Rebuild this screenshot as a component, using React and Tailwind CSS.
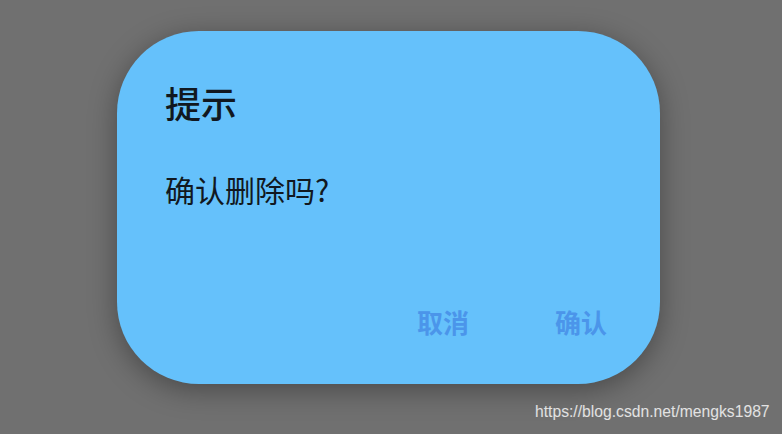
import React from 'react';

const cjk = '"Noto Sans CJK SC", "Noto Sans", sans-serif';

export default function App() {
  return (
    <div
      className="relative w-[782px] h-[434px] overflow-hidden bg-[#707070] pl-[117px] pt-[31px]"
      style={{ fontFamily: cjk }}
    >
      {/* Dialog */}
      <div className="flex w-[543px] h-[353px] flex-col rounded-[82px] bg-[#65c1fb] pl-[48px] pr-[53px] shadow-[0_6px_28px_rgba(0,0,0,0.35)]">
        <h2 className="mt-[53px] text-[36px] font-medium leading-none text-[#111820]">提示</h2>
        <p className="mt-[54px] text-[30px] leading-none text-[#111820]">确认删除吗?</p>
        <div className="mt-auto mb-[49px] flex justify-end gap-[86px]">
          <button className="text-[26px] font-bold leading-none text-[#4b95ea]">取消</button>
          <button className="text-[26px] font-bold leading-none text-[#4b95ea]">确认</button>
        </div>
      </div>

      {/* Watermark */}
      <div className="absolute left-[535px] top-[404px] text-[15.7px] leading-none text-white/80 font-['Liberation_Sans',sans-serif]">
        https://blog.csdn.net/mengks1987
      </div>
    </div>
  );
}
